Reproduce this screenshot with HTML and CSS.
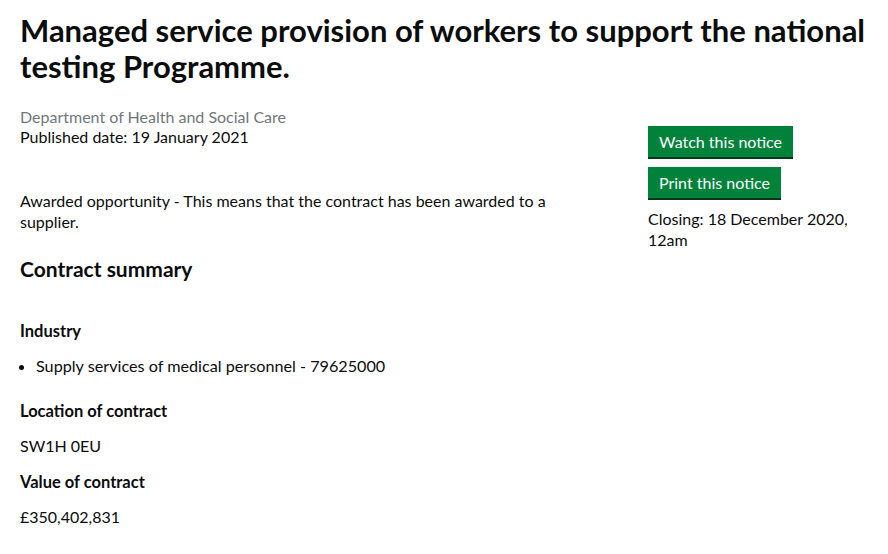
FILE: index.html
```html
<!DOCTYPE html>
<html>
<head>
  <link rel="stylesheet" href="styles.css">
</head>

<body>
  <div class="page">
    <h1 class="title">Managed service provision of workers to support the national testing Programme.</h1>

    <div class="layout">
      <div class="main-col">
        <p class="org">Department of Health and Social Care</p>
        <p class="published">Published date: 19 January 2021</p>
        <p class="status">Awarded opportunity - This means that the contract has been awarded to a supplier.</p>

        <h2 class="summary-title">Contract summary</h2>

        <h3 class="field-title first">Industry</h3>
        <ul class="field-list">
          <li>Supply services of medical personnel - 79625000</li>
        </ul>

        <h3 class="field-title">Location of contract</h3>
        <p class="field-value">SW1H 0EU</p>

        <h3 class="field-title after-value">Value of contract</h3>
        <p class="field-value">£350,402,831</p>
      </div>

      <div class="side-col">
        <button class="green-button">Watch this notice</button>
        <button class="green-button">Print this notice</button>
        <p class="closing">Closing: 18 December 2020, 12am</p>
      </div>
    </div>
  </div>
</body>
</html>
```

FILE: styles.css
```css
body {
  margin: 0;
  font-family: Lato, "Liberation Sans", sans-serif;
  color: #0b0c0c;
  background: #fff;
}

.page {
  padding: 0 20px;
}

/* Heading */
.title {
  margin: 12px 0 0;
  font-size: 31px;
  line-height: 36px;
  font-weight: 700;
}

.layout {
  display: grid;
  grid-template-columns: 560px 220px;
  column-gap: 68px;
  margin-top: 23px;
}

p {
  margin: 0;
  font-size: 16px;
  line-height: 21px;
}

.org {
  color: #6f777b;
  line-height: 20px;
}

.published {
  line-height: 20px;
}

.status {
  margin-top: 43px;
}

.summary-title {
  margin: 24px 0 0;
  font-size: 21px;
  line-height: 25px;
  font-weight: 700;
}

.field-title {
  margin: 25px 0 0;
  font-size: 16.5px;
  line-height: 21px;
  font-weight: 700;
}

.field-title.first {
  margin-top: 40px;
}

.field-title.after-value {
  margin-top: 16px;
}

.field-list {
  margin: 13px 0 0;
  padding-left: 16px;
  font-size: 16.2px;
  line-height: 21px;
}

.field-value {
  margin-top: 13px;
}

/* Side buttons */
.side-col {
  display: flex;
  flex-direction: column;
  align-items: flex-start;
  padding-top: 19px;
}

.green-button {
  font-family: inherit;
  font-size: 16px;
  line-height: 19px;
  padding: 6px 11px;
  color: #fff;
  background-color: #00823b;
  border: none;
  border-radius: 0;
  box-shadow: 0 2px 0 #003618;
  margin-bottom: 10px;
  cursor: pointer;
}

.closing {
  margin-top: 0;
}
```
